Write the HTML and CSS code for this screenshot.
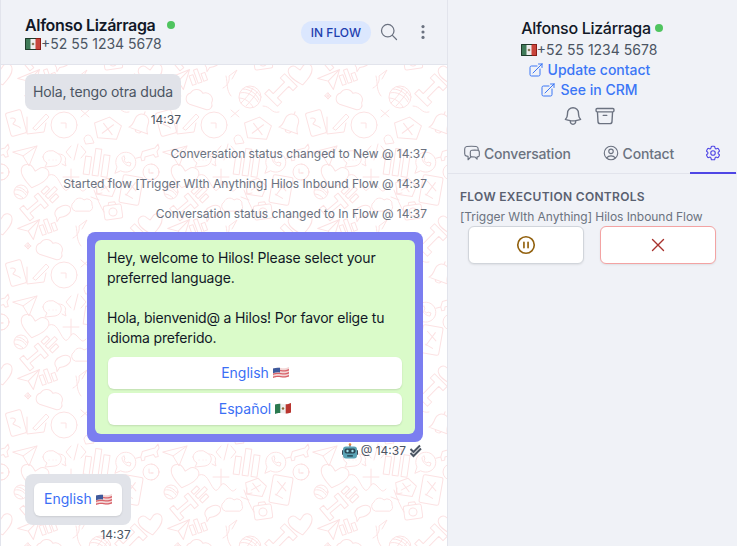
FILE: index.html
```html
<!DOCTYPE html>
<html lang="en">
   <head>
      <meta charset="UTF-8">
      <meta name="viewport" content="width=device-width, initial-scale=1.0">
      <title>Alfonso Lizárraga - Inbox</title>
      <link rel="stylesheet" href="styles.css">
   </head>
   <body>
      <!-- shared flags and the chat wallpaper -->
      <svg class="defs" width="0" height="0" aria-hidden="true">
         <defs>
            <symbol id="flag-mx-box" viewBox="0 0 16 12">
               <rect width="16" height="12" fill="#eee"/>
               <rect width="5.5" height="12" fill="#3f7a58"/>
               <rect x="10.5" width="5.5" height="12" fill="#c8453c"/>
               <circle cx="8" cy="6" r="1.3" fill="#8a7a5a"/>
               <path d="M.5.5h15v11H.5z" fill="none" stroke="#1f3a2a"/>
               <path d="M11 .5h4.5v11H11" fill="none" stroke="#8c1d18"/>
            </symbol>
            <symbol id="flag-mx" viewBox="0 0 16 12">
               <path d="M0 2.500C3 1.500 5 1.500 8 2s5 .2 8-1v9.500c-3 1.200-5 1.300-8 .8s-5-.5-8 .7z" fill="#eee"/>
               <path d="M0 2.500C2 1.800 3.500 1.600 5.300 1.700v9.400C3.500 11 2 11.200 0 12z" fill="#2b7a4f"/>
               <path d="M10.700 2.300c1.800 0 3.300-.4 5.300-1.300v9.500c-2 .8-3.500 1.100-5.300 1.100z" fill="#b9352f"/>
               <circle cx="8" cy="6.500" r="1.200" fill="#8a6a3a"/>
            </symbol>
            <symbol id="flag-us" viewBox="0 0 16 12">
               <path d="M0 2.500C3 1.500 5 1.500 8 2s5 .2 8-1v9.500c-3 1.200-5 1.300-8 .8s-5-.5-8 .7z" fill="#f3d6d6"/>
               <path d="M0 4.500c3-1 5-1 8-.5s5 .2 8-1v1.500c-3 1.200-5 1.200-8 .7s-5-.5-8 .7zM0 7.500c3-1 5-1 8-.5s5 .2 8-1v1.500c-3 1.200-5 1.200-8 .7s-5-.5-8 .7zM0 10.500c3-1 5-1 8-.5s5 .2 8-1v1.500c-3 1.200-5 1.300-8 .8s-5-.5-8 .7z" fill="#d9636b"/>
               <path d="M0 2.500c2.500-.8 4.500-1 7-.7v4.700c-2.500-.3-4.500-.1-7 .7z" fill="#3f5a9c"/>
            </symbol>
            <symbol id="robot" viewBox="0 0 16 16">
               <circle cx="8" cy="1.500" r="1.300" fill="#e8823c"/>
               <rect x="7.400" y="2" width="1.200" height="2" fill="#6b7280"/>
               <rect x="0" y="7" width="2.500" height="5" rx="1" fill="#3b4a58"/>
               <rect x="13.500" y="7" width="2.500" height="5" rx="1" fill="#3b4a58"/>
               <rect x="1" y="3.500" width="14" height="12" rx="3" fill="#5aa3b5"/>
               <rect x="2.500" y="5.500" width="11" height="5" rx="2" fill="#2b4a58"/>
               <circle cx="5.500" cy="8" r="1.200" fill="#9fe0ec"/>
               <circle cx="10.500" cy="8" r="1.200" fill="#9fe0ec"/>
               <rect x="5" y="12" width="6" height="1.800" rx=".7" fill="#2c5563"/>
            </symbol>
            <g id="doodles" fill="none" stroke="#fce2e3" stroke-width="1" stroke-linecap="round" stroke-linejoin="round">
               <!-- row around y 75-125 -->
               <path transform="translate(150 75) rotate(-10)" d="M0 10C-8 4-12 0-12-5c0-5 6-7 9-3l3 3 3-3c3-4 9-2 9 3 0 5-4 9-12 15z"/>
               <path transform="translate(28 80) rotate(-8)" d="M-11 -3L12-9 3 10-1 1zM-1 1L12-9"/>
               <g transform="translate(47 77) rotate(-20)"><rect x="-8" y="-4" width="4" height="10"/><rect x="-2" y="-8" width="4" height="14"/><rect x="4" y="-2" width="4" height="8"/></g>
               <path transform="translate(50 100) rotate(15)" d="M-10 7a6 6 0 0 1-2-11 7 7 0 0 1 12-3 7 7 0 0 1 11 7 5 5 0 0 1-3 8z"/>
               <g transform="translate(99 97)"><circle r="11"/><path d="M-10-4c6-2 14 2 18 9M-7-8c7 0 14 5 16 11M-3-10c6 1 11 5 13 9M-11 1c6 0 11 4 14 9M-9 6c3-3 9-9 12-15M-4 9c4-4 9-10 11-14"/></g>
               <path transform="translate(130 90) rotate(-45)" d="M-14-9h6v6h16v-6h6v18h-6v-6H-8v6h-6z"/>
               <path d="M27 93l3 3-3 3-3-3zM27 93l0 6M24 96h6"/>
               <path d="M80 110l8 7M88 110l-8 7"/>
               <path d="M75 76c2 8 0 14 5 20M72 88c4-2 7-6 6-12l8-6-5 9"/>
               <path d="M112 106c8 0 8 8 16 6"/>
               <g transform="translate(63 125)"><circle r="13"/><path d="M-3-2h5v5"/></g>
               <g transform="translate(107 128) rotate(8)"><path d="M-14-3L0-11 13-4 10 10-9 11z"/><path d="M-5-4L5 6M5-4L-5 6"/></g>
               <path transform="translate(140 123) rotate(20)" d="M-10 8c3-3 3-6 3-10a7 7 0 0 1 14 0c0 4 0 7 3 10zM-3 8c0 3 6 3 6 0M0-9v-3"/>
               <g transform="translate(15 123) rotate(-15)"><rect x="-8" y="-12" width="16" height="24" rx="2"/><path d="M-4-6c4 0 6 3 2 5s4 3 5 7"/></g>
               <g transform="translate(38 125)"><path d="M-12-8V9l17-2 2-9M-6 3L7-11l3 3L-3 5z"/></g>
               <!-- row around y 150-215 -->
               <path transform="translate(25 153)" d="M-13-1L11-7 3 13-3 3zM-3 3L11-7"/>
               <g transform="translate(52 160)"><path d="M-10-3a8 7 0 0 1 14-4 8 7 0 0 1-2 13l-10 1 2-4a7 7 0 0 1-4-6z"/><path d="M6-6c5 0 8 4 6 8l1 4-4-2M-4 0h.1M0 0h.1M3 0h.1"/></g>
               <path d="M70 146l-5 6 5 6M80 146l5 6-5 6M77 144l-4 16"/>
               <g transform="translate(98 162) rotate(8)"><rect x="-14" y="-4" width="6" height="18"/><rect x="-5" y="-13" width="6" height="27"/><rect x="4" y="-8" width="6" height="22"/></g>
               <g transform="translate(125 162)"><path d="M-11 11l2-6a10 10 0 1 1 4 4z"/><path d="M-4-4c0 4 4 8 8 8l1-3-3-1-1 1c-1 0-3-2-3-3l1-1-1-3z"/></g>
               <path transform="translate(147 153) rotate(-15)" d="M-13 2h5l3-5h13l4-3v4l-3 3v5h-3l-1-3h-9l-1 3h-3v-4h-5z"/>
               <path d="M83 139c0-4 6-6 8-1l2 5-8 1z"/>
               <!-- row around y 175-215 -->
               <path transform="translate(33 177) rotate(12)" d="M0 11C-9 5-14 0-14-5c0-6 7-8 11-4l3 3 3-3c4-4 11-2 11 4 0 5-5 10-14 16z"/>
               <path d="M62 177h16M70 169v16"/>
               <g transform="translate(0 172)"><circle r="8"/><path d="M-2-3v4h4"/></g>
               <g transform="translate(150 172)"><circle r="8"/><path d="M-2-3v4h4"/></g>
               <path d="M48 175c8-3 10 8 15 14s6-10 12-4 6 8 10 4"/>
               <g transform="translate(20 192)"><circle r="7"/><path d="M-6-2c4-1 9 1 11 5M-4-5c4 0 8 3 10 6M-6 2c3 0 6 2 8 4"/></g>
               <g transform="translate(50 193) rotate(45)"><rect x="-8" y="-2" width="4" height="8"/><rect x="-2" y="-7" width="4" height="13"/><rect x="4" y="-3" width="4" height="9"/></g>
               <path transform="translate(33 207) rotate(-40)" d="M-12-8h5v6h14v-6h5v16h-5v-6H-7v6h-5z"/>
               <path transform="translate(62 212) rotate(-20)" d="M-9 7l1-4c-2-6 3-9 9-9s9 4 6 8c-3 3-8 3-12 2z"/>
               <path transform="translate(82 205)" d="M-8 6a5 5 0 0 1-1-9 6 6 0 0 1 10-2 5 5 0 0 1 8 5 4 4 0 0 1-2 6z"/>
               <g transform="translate(112 212) rotate(-8)"><rect x="-9" y="-7" width="18" height="14" rx="2"/><circle r="4"/><path d="M-4-7l1-3h6l1 3"/></g>
               <path d="M93 190c3 8 6 16 10 22M90 197l8 3M96 188l-1 6 6-1"/>
               <g transform="translate(130 190) rotate(10)"><rect x="-10" y="-14" width="20" height="28" rx="2"/><path d="M-5-8l10 8M3-8l-7 14M-5 5l8 3"/></g>
               <g transform="translate(105 187) rotate(12)"><path d="M-11-2L0-9 10-3 8 8-7 9z"/><path d="M-4-3L4 4M4-3L-4 4"/></g>
            </g>
            <pattern id="wallpaper" width="150" height="150" patternUnits="userSpaceOnUse" patternTransform="translate(0 -65)">
               <use href="#doodles"/>
               <use href="#doodles" x="-150"/>
               <use href="#doodles" y="-150"/>
               <use href="#doodles" x="-150" y="-150"/>
            </pattern>
         </defs>
      </svg>

      <div class="app">
         <main class="chat">
            <header class="chat-header">
               <div class="chat-contact">
                  <div class="contact-name">Alfonso Lizárraga <span class="online-dot"></span></div>
                  <div class="contact-phone"><svg class="flag"><use href="#flag-mx-box"/></svg>+52 55 1234 5678</div>
               </div>
               <div class="chat-actions">
                  <span class="badge">In flow</span>
                  <svg class="icon icon-20" viewBox="0 0 24 24"><path d="M21 21l-5.197-5.197m0 0A7.5 7.500 0 105.196 5.196a7.500 7.500 0 0010.607 10.607z"/></svg>
                  <svg class="icon icon-20 kebab" viewBox="0 0 24 24"><circle cx="12" cy="5.500" r="1.900"/><circle cx="12" cy="12" r="1.900"/><circle cx="12" cy="18.500" r="1.900"/></svg>
               </div>
            </header>

            <div class="messages">
               <svg class="wallpaper" width="100%" height="100%" aria-hidden="true"><rect width="100%" height="100%" fill="url(#wallpaper)"/></svg>

               <div class="msg-in">
                  <div class="bubble-in">Hola, tengo otra duda</div>
                  <div class="msg-time">14:37</div>
               </div>

               <div class="status first">Conversation status changed to New @ 14:37</div>
               <div class="status">Started flow [Trigger WIth Anything] Hilos Inbound Flow @ 14:37</div>
               <div class="status">Conversation status changed to In Flow @ 14:37</div>

               <div class="msg-out">
                  <div class="bubble-out">
                     <div class="bubble-inner">
                        <p class="bubble-text">Hey, welcome to Hilos! Please select your preferred language.

Hola, bienvenid@ a Hilos! Por favor elige tu idioma preferido.</p>
                        <div class="quick-replies">
                           <div class="quick-reply">English <svg class="flag"><use href="#flag-us"/></svg></div>
                           <div class="quick-reply">Español <svg class="flag"><use href="#flag-mx"/></svg></div>
                        </div>
                     </div>
                  </div>
                  <div class="msg-meta">
                     <svg class="robot"><use href="#robot"/></svg>
                     <span>@ 14:37</span>
                     <svg class="ticks" viewBox="0 0 14 14"><path d="M1.500 5l3 3 6.500-6.500M1.500 9l3 3 7.500-7.500" fill="none" stroke="#4b5563" stroke-width="2"/></svg>
                  </div>
               </div>

               <div class="msg-in reply">
                  <div class="bubble-reply">
                     <div class="reply-chip">English <svg class="flag"><use href="#flag-us"/></svg></div>
                  </div>
                  <div class="msg-time">14:37</div>
               </div>
            </div>
         </main>

         <aside class="details">
            <div class="details-head">
               <div class="details-name">Alfonso Lizárraga <span class="online-dot"></span></div>
               <div class="details-phone"><svg class="flag"><use href="#flag-mx-box"/></svg>+52 55 1234 5678</div>
               <a class="details-link" href="#"><svg class="icon icon-16" viewBox="0 0 24 24"><path d="M13.500 6H5.250A2.250 2.250 0 003 8.250v10.500A2.250 2.250 0 005.250 21h10.500A2.250 2.250 0 0018 18.750V10.500m-10.500 6L21 3m0 0h-5.250M21 3v5.250"/></svg>Update contact</a>
               <a class="details-link" href="#"><svg class="icon icon-16" viewBox="0 0 24 24"><path d="M13.500 6H5.250A2.250 2.250 0 003 8.250v10.500A2.250 2.250 0 005.250 21h10.500A2.250 2.250 0 0018 18.750V10.500m-10.500 6L21 3m0 0h-5.250M21 3v5.250"/></svg>See in CRM</a>
               <div class="details-actions">
                  <svg class="icon icon-22" viewBox="0 0 24 24"><path d="M14.857 17.082a23.848 23.848 0 005.454-1.310A8.967 8.967 0 0118 9.750v-.7V9A6 6 0 006 9v.75a8.967 8.967 0 01-2.312 6.022c1.733.64 3.560 1.085 5.455 1.310m5.714 0a24.255 24.255 0 01-5.714 0m5.714 0a3 3 0 11-5.714 0"/></svg>
                  <svg class="icon icon-22" viewBox="0 0 24 24"><path d="M20.250 7.500l-.625 10.632a2.250 2.250 0 01-2.247 2.118H6.622a2.250 2.250 0 01-2.247-2.118L3.750 7.500M10 11.250h4M3.375 7.500h17.250c.621 0 1.125-.504 1.125-1.125v-1.500c0-.621-.504-1.125-1.125-1.125H3.375c-.621 0-1.125.504-1.125 1.125v1.500c0 .621.504 1.125 1.125 1.125z"/></svg>
               </div>
            </div>

            <nav class="tabs">
               <div class="tab"><svg class="icon icon-18" viewBox="0 0 24 24"><path d="M20.250 8.511c.884.284 1.500 1.128 1.500 2.097v4.286c0 1.136-.847 2.100-1.980 2.193-.34.027-.68.052-1.020.072v3.091l-3-3c-1.354 0-2.694-.055-4.020-.163a2.115 2.115 0 01-.825-.242m9.345-8.334a2.126 2.126 0 00-.476-.095 48.640 48.640 0 00-8.048 0c-1.131.094-1.976 1.057-1.976 2.192v4.286c0 .837.46 1.580 1.155 1.951m9.345-8.334V6.637c0-1.621-1.152-3.026-2.760-3.235A48.455 48.455 0 0011.250 3c-2.115 0-4.198.137-6.240.402-1.608.209-2.760 1.614-2.760 3.235v6.226c0 1.621 1.152 3.026 2.760 3.235.577.075 1.157.14 1.740.194V21l4.155-4.155"/></svg>Conversation</div>
               <div class="tab"><svg class="icon icon-18" viewBox="0 0 24 24"><path d="M17.982 18.725A7.488 7.488 0 0012 15.750a7.488 7.488 0 00-5.982 2.975m11.963 0a9 9 0 10-11.963 0m11.963 0A8.966 8.966 0 0112 21a8.966 8.966 0 01-5.982-2.275M15 9.750a3 3 0 11-6 0 3 3 0 016 0z"/></svg>Contact</div>
               <div class="tab tab-active"><svg class="icon icon-18" viewBox="0 0 24 24"><path d="M9.594 3.940c.09-.542.56-.94 1.110-.94h2.593c.55 0 1.020.398 1.110.94l.213 1.281c.063.374.313.686.645.87.074.04.147.083.22.127.324.196.72.257 1.075.124l1.217-.456a1.125 1.125 0 011.370.49l1.296 2.247a1.125 1.125 0 01-.26 1.431l-1.003.827c-.293.24-.438.613-.431.992a6.759 6.759 0 010 .255c-.007.378.138.75.43.99l1.005.828c.424.35.534.954.26 1.430l-1.298 2.247a1.125 1.125 0 01-1.369.491l-1.217-.456c-.355-.133-.75-.072-1.076.124a6.570 6.570 0 01-.22.128c-.331.183-.581.495-.644.869l-.213 1.280c-.09.543-.56.941-1.110.941h-2.594c-.55 0-1.020-.398-1.110-.94l-.213-1.281c-.062-.374-.312-.686-.644-.87a6.520 6.520 0 01-.22-.127c-.325-.196-.72-.257-1.076-.124l-1.217.456a1.125 1.125 0 01-1.369-.49l-1.297-2.247a1.125 1.125 0 01.26-1.431l1.004-.827c.292-.24.437-.613.43-.992a6.932 6.932 0 010-.255c.007-.378-.138-.75-.43-.99l-1.004-.828a1.125 1.125 0 01-.26-1.430l1.297-2.247a1.125 1.125 0 011.370-.491l1.216.456c.356.133.751.072 1.076-.124.072-.044.146-.087.22-.128.332-.183.582-.495.644-.869l.214-1.281z"/><path d="M15 12a3 3 0 11-6 0 3 3 0 016 0z"/></svg></div>
            </nav>

            <section class="flow-controls">
               <h3 class="flow-title">Flow execution controls</h3>
               <div class="flow-name">[Trigger WIth Anything] Hilos Inbound Flow</div>
               <div class="flow-buttons">
                  <button class="flow-btn"><svg class="icon icon-22 pause" viewBox="0 0 24 24"><path d="M14.250 9v6m-4.500 0V9M21 12a9 9 0 11-18 0 9 9 0 0118 0z"/></svg></button>
                  <button class="flow-btn flow-btn-danger"><svg class="icon icon-22 cancel" viewBox="0 0 24 24"><path d="M6 18L18 6M6 6l12 12"/></svg></button>
               </div>
            </section>
         </aside>
      </div>
   </body>
</html>
```

FILE: styles.css
```css
/* Inbox conversation view */
* {
box-sizing: border-box;
}
body {
font-family: Inter, "Liberation Sans", sans-serif;
margin: 0;
height: 546px;
overflow: hidden;
background-color: #f0f2f7;
color: #111827;
}
.defs {
display: block;
height: 0;
}
.app {
display: flex;
height: 546px;
}
.icon {
fill: none;
stroke: currentColor;
stroke-width: 1.5;
stroke-linecap: round;
stroke-linejoin: round;
flex: none;
}
.icon-16 { width: 16px; height: 16px; }
.icon-18 { width: 18px; height: 18px; }
.icon-20 { width: 20px; height: 20px; }
.icon-22 { width: 22px; height: 22px; }
.flag {
width: 16px;
height: 12px;
flex: none;
}
.online-dot {
display: inline-block;
width: 8px;
height: 8px;
border-radius: 50%;
background-color: #4fc45f;
vertical-align: 2px;
}

/* left column */
.chat {
width: 448px;
flex: none;
display: flex;
flex-direction: column;
border-left: 1px solid #e2e4ec;
border-right: 1px solid #e2e4ec;
}
.chat-header {
height: 65px;
flex: none;
display: flex;
justify-content: space-between;
padding: 0 14px 0 24px;
background-color: #f0f2f7;
border-bottom: 1px solid #e2e4ec;
}
.chat-contact {
padding-top: 15px;
}
.contact-name {
font-size: 16px;
line-height: 20px;
font-weight: 600;
letter-spacing: -0.35px;
color: #111827;
}
.contact-name .online-dot {
margin-left: 8px;
}
.contact-phone {
display: flex;
align-items: center;
margin-top: -1px;
font-size: 14px;
line-height: 20px;
color: #4b5563;
}
.chat-actions {
display: flex;
align-items: center;
gap: 8px;
color: #6b7280;
}
.badge {
font-size: 12px;
line-height: 23px;
height: 23px;
padding: 0 10px;
font-weight: 500;
text-transform: uppercase;
border-radius: 12px;
background-color: #dbe7fe;
color: #1e40af;
}
.kebab {
margin-left: 6px;
fill: #6b7280;
stroke: none;
}

.messages {
position: relative;
flex: 1;
overflow: hidden;
background-color: #fff;
padding: 9px 20px 0 24px;
display: flex;
flex-direction: column;
}
.wallpaper {
position: absolute;
top: 0;
left: 0;
}
.msg-in, .msg-out, .status {
position: relative;
}
.msg-in {
align-self: flex-start;
}
.bubble-in {
background-color: #e1e3e9;
border-radius: 8px;
padding: 8px;
font-size: 14px;
line-height: 20px;
letter-spacing: -0.15px;
color: #4b5563;
}
.msg-time {
text-align: right;
font-size: 12px;
line-height: 16px;
margin-top: 2px;
color: #4b5563;
}
.status {
text-align: right;
font-size: 12px;
line-height: 16px;
margin-top: 14px;
letter-spacing: -0.03px;
color: #6b7280;
}
.status.first {
margin-top: 18px;
}
.msg-out {
margin: 10px 4px 0 0;
align-self: flex-end;
width: 336px;
}
.bubble-out {
background-color: #7b7ef0;
border-radius: 8px;
padding: 8px;
}
.bubble-inner {
background-color: #dafbc9;
border-radius: 6px;
padding: 8px 12px 9px;
}
.bubble-text {
margin: 0;
font-size: 14px;
line-height: 20px;
letter-spacing: -0.18px;
white-space: pre-line;
color: #111827;
}
.quick-replies {
display: flex;
flex-direction: column;
gap: 4px;
margin: 9px 1px 0;
}
.quick-reply {
height: 32px;
display: flex;
align-items: center;
justify-content: center;
gap: 4px;
padding-bottom: 2px;
background-color: #fff;
border-radius: 6px;
box-shadow: 0 1px 2px rgba(0, 0, 0, 0.12);
font-size: 14px;
color: #3b6ff5;
}
.msg-meta {
display: flex;
align-items: center;
justify-content: flex-end;
gap: 3px;
margin-top: 1px;
height: 16px;
font-size: 12px;
line-height: 16px;
color: #4b5563;
}
.robot {
width: 16px;
height: 16px;
}
.ticks {
width: 14px;
height: 14px;
}
.reply {
margin-top: 15px;
}
.bubble-reply {
background-color: #e1e3e9;
border-radius: 8px;
padding: 9px;
}
.reply-chip {
display: flex;
align-items: center;
gap: 4px;
height: 33px;
padding: 0 10px 2px;
background-color: #fff;
border-radius: 6px;
box-shadow: 0 1px 2px rgba(0, 0, 0, 0.1);
font-size: 14px;
color: #3b6ff5;
}

/* right column */
.details {
width: 289px;
flex: none;
padding-top: 17px;
background-color: #f0f2f7;
}
.details-head {
padding-right: 7px;
text-align: center;
}
.details-name {
padding-left: 6px;
font-size: 16px;
line-height: 23px;
font-weight: 500;
letter-spacing: -0.3px;
color: #111827;
}
.details-phone {
display: flex;
align-items: center;
justify-content: center;
font-size: 14px;
line-height: 20px;
color: #4b5563;
}
.details-link {
display: flex;
align-items: center;
justify-content: center;
gap: 4px;
font-size: 14px;
line-height: 20px;
font-weight: 500;
color: #3b76f6;
text-decoration: none;
}
.details-actions {
display: flex;
justify-content: center;
gap: 10px;
margin-top: 5px;
color: #6b7280;
}
.tabs {
display: flex;
margin-top: 7px;
height: 40px;
border-bottom: 1px solid #e2e4ec;
}
.tab {
display: flex;
align-items: center;
gap: 3px;
height: 40px;
padding: 0 16px 0 15px;
border-bottom: 2px solid transparent;
font-size: 14px;
font-weight: 500;
letter-spacing: -0.2px;
color: #6b7280;
}
.tab-active {
width: 47px;
margin: 0 1px 0 auto;
padding: 0;
justify-content: center;
border-bottom-color: #4f46e5;
color: #4f46e5;
}
.flow-controls {
padding: 15px 12px 0;
}
.flow-title {
margin: 0;
font-size: 12px;
line-height: 16px;
font-weight: 600;
letter-spacing: 0.3px;
text-transform: uppercase;
color: #596070;
}
.flow-name {
margin-top: 4px;
font-size: 12px;
line-height: 16px;
letter-spacing: -0.05px;
color: #6b7280;
white-space: nowrap;
}
.flow-buttons {
display: flex;
gap: 16px;
margin: 1px 9px 0 8px;
}
.flow-btn {
flex: 1;
height: 38px;
display: flex;
align-items: center;
justify-content: center;
background-color: #fff;
border: 1px solid #d1d5db;
border-radius: 6px;
box-shadow: 0 1px 2px rgba(0, 0, 0, 0.08);
padding: 0;
}
.flow-btn-danger {
border-color: #f3a3a3;
}
.pause {
color: #92610e;
stroke-width: 1.8;
}
.cancel {
color: #a8322d;
}
```
